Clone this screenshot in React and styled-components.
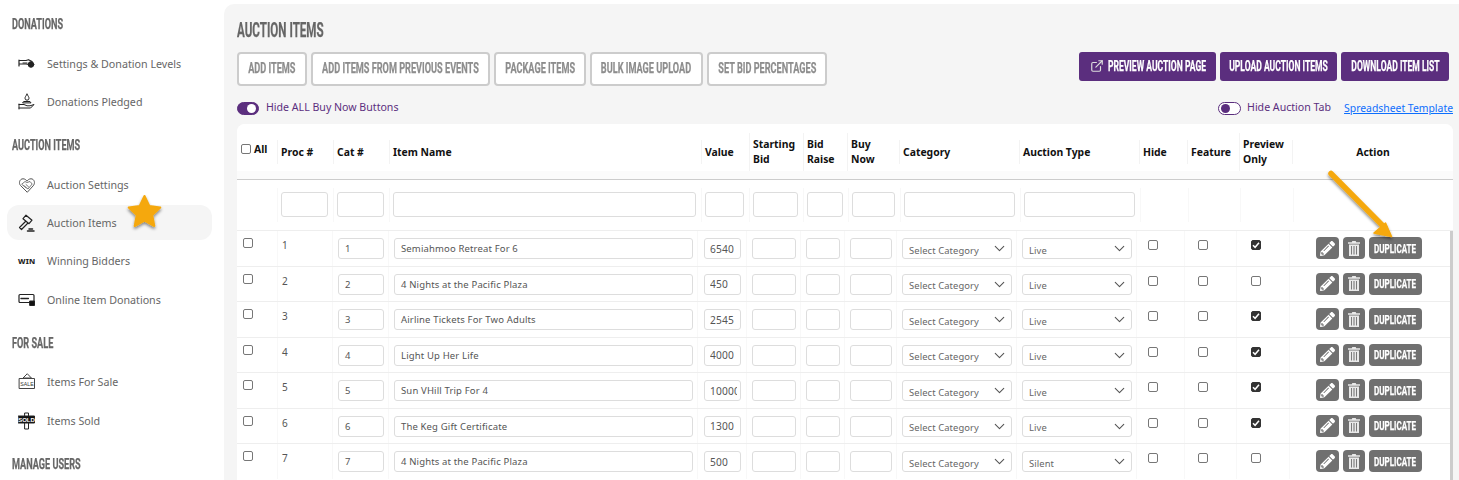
import React from "react";
import styled, { createGlobalStyle } from "styled-components";
import { ExternalLink, ChevronDown } from "lucide-react";
import { FaPencilAlt } from "react-icons/fa";

const Global = createGlobalStyle`
  html, body { margin: 0; padding: 0; height: 480px; overflow: hidden; background: #fff; }
  * { box-sizing: border-box; }
  body { font-family: "Noto Sans", "Open Sans", sans-serif; }
`;
const Display = `font-family: "Roboto", "Liberation Sans", sans-serif; font-weight: 700; text-transform: uppercase; -webkit-text-stroke: .25px currentColor;`;
const HEAD_COLS = "40px 56px 56px 312px 48px 54px 44px 52px 120px 120px 48px 52px 53px 161px";
const FILTER_COLS = "40px 56px 56px 312px 48px 54px 45px 52px 120px 120px 48px 52px 53px 160px";
const BODY_COLS = "40px 55px 56px 309px 49px 54px 44px 52px 120px 120px 48px 52px 53px 164px";

const Squeeze = styled.span`
  display: inline-block; flex: none; white-space: nowrap;
  transform: scaleX(${p => p.$s || 0.61}); transform-origin: ${p => p.$left ? "left" : "center"};
`;
const Page = styled.div`position: relative; display: flex; width: 1459px; height: 480px; overflow: hidden;`;
const Sidebar = styled.nav`width: 224px; flex: none; padding: 18px 12px 0 7px; display: flex; flex-direction: column;`;
const SideHeading = styled.h3`
  ${Display} margin: ${p => p.$top || 0}px 0 0 5px; height: 14px; line-height: 14px; font-size: 14.5px; color: #666; white-space: nowrap;
`;
const SideList = styled.div`display: flex; flex-direction: column; margin-top: ${p => p.$top || 14}px;`;
const SideItem = styled.div`
  display: flex; align-items: center; height: ${p => p.$h || 38}px; margin-top: ${p => p.$mt || 0}px; padding-left: 11px; border-radius: 12px;
  background: ${p => p.$active ? "#f5f5f5" : "transparent"};
  font-size: 10.7px; color: #666; white-space: nowrap;
`;
const SideIcon = styled.span`width: 29px; flex: none; display: flex; align-items: center; color: #111;`;
const WinMark = styled.span`font-size: 7.5px; font-weight: 800; color: #222; letter-spacing: .2px;`;

const Main = styled.main`flex: 1; margin: 4px 0 0 0; background: #f5f5f5; border-radius: 10px 0 0 0; padding: 0 6px 0 13px; position: relative;`;
const Title = styled.h1`${Display} margin: 16px 0 0; height: 20px; line-height: 20px; font-size: 20px; color: #666; white-space: nowrap;`;
const ActionsBar = styled.div`display: flex; justify-content: space-between; align-items: flex-start; margin-top: 12px; padding-right: 4px;`;
const BtnGroup = styled.div`display: flex; gap: 4px;`;
const OutlineBtn = styled.button`
  ${Display} display: flex; align-items: center; justify-content: center; width: ${p => p.$w}px; height: 34px; padding: 0 0 2px; background: #fff; border: 2px solid #ccc; border-radius: 4px; color: #8d8d8d; font-size: 15px;
`;
const PurpleBtn = styled.button`
  ${Display} position: relative; display: flex; align-items: center; justify-content: center; width: ${p => p.$w}px; height: 29px; padding: 0 0 2px ${p => p.$pl || 0}px; background: #5b2e7e; border: 0; border-radius: 3px; color: #fff; font-size: 15px;
`;
const BtnIcon = styled.span`position: absolute; left: 11px; top: 7px; display: flex; -webkit-text-stroke: 0;`;
const ToggleBar = styled.div`display: flex; justify-content: space-between; align-items: center; margin-top: 16px; height: 13px; font-size: 10.6px; color: #5b2e7e;`;
const ToggleSet = styled.div`display: flex; align-items: center; gap: ${p => p.$gap || 7}px;`;
const ToggleText = styled.span`margin-top: -3px;`;
const Toggle = styled.span`
  width: ${p => p.$on ? 22 : 23}px; height: 13px; border-radius: 7px; display: flex; align-items: center; padding: 0 2px;
  border: 1px solid #5b2e7e; background: ${p => p.$on ? "#5b2e7e" : "#fff"}; justify-content: ${p => p.$on ? "flex-end" : "flex-start"};
  &::after { content: ""; width: 9px; height: 9px; border-radius: 50%; background: ${p => p.$on ? "#fff" : "#5b2e7e"}; }
`;
const SheetLink = styled.a`color: #0d6efd; text-decoration: underline; margin: -1px 0 0 7px; font-size: 10.4px;`;

const Card = styled.section`margin-top: 9px; width: 1216px; height: 360px; background: #fff; border-radius: 8px 8px 0 0; position: relative; overflow: hidden;`;
const HeadRow = styled.div`
  display: grid; grid-template-columns: ${HEAD_COLS}; height: 56px; align-items: center; border-bottom: 1px solid #ccc;
  background: linear-gradient(#fff 47px, #fbfbfb 47px);
`;
const HeadCell = styled.div`
  display: flex; align-items: center; justify-content: ${p => p.$center ? "center" : "flex-start"}; height: ${p => p.$tall ? 38 : 24}px; padding: ${p => p.$tall ? 0 : 2}px 0 0 ${p => p.$center ? 0 : 3}px;
  border-left: ${p => p.$first ? 0 : 1}px solid #f3f3f3; font-size: 10.4px; line-height: 15px; font-weight: 700; color: #111; white-space: nowrap;
`;
const AllLabel = styled.label`display: flex; align-items: center; gap: 3px; margin: -7px 0 0 1px;`;
const SmallCheck = styled.span`width: 10px; height: 10px; border: 1px solid #767676; border-radius: 2px; background: #fff;`;
const FilterRow = styled.div`display: grid; grid-template-columns: ${FILTER_COLS}; height: 50px; align-items: center;`;
const FilterCell = styled.div`padding: 0 5px 0 3px; height: 34px; display: flex; align-items: center; border-left: ${p => p.$first ? 0 : 1}px solid #f8f8f8;`;
const FilterBox = styled.span`display: block; width: 100%; height: 25px; margin-top: -1px; border: 1px solid #ddd; border-radius: 3px; background: #fff;`;
const Row = styled.div`display: grid; grid-template-columns: ${BODY_COLS}; height: 35.5px; border-top: 1px solid #eee; align-items: stretch;`;
const Cell = styled.div`
  display: flex; align-items: ${p => p.$top ? "flex-start" : "center"}; padding: ${p => p.$top ? "7px 4px 0 4px" : "0 4px 0 5px"};
  border-left: ${p => p.$first ? 0 : 1}px solid #f8f8f8;
  font-size: 10px; color: #555; overflow: hidden;
`;
const ValueCell = styled(Cell)`padding: 0 5px 0 6px;`;
const CheckCell = styled(Cell)`padding: ${p => p.$pt || 9}px 0 0 ${p => p.$pl}px; align-items: flex-start;`;
const Box = styled.span`
  display: flex; width: 100%; height: 21px; margin-top: .5px; align-items: center; padding-left: 6px; border: 1px solid #ddd; border-radius: 3px; background: #fff; font-size: 9.5px; color: #555; white-space: nowrap; overflow: hidden; letter-spacing: .15px;
`;
const ValueBox = styled(Box)`
  padding: 0 3px 0 5px; font-size: 10.2px; letter-spacing: .2px;
  & > span { display: block; min-width: 0; overflow: hidden; }
`;
const SelectBox = styled(Box)`
  justify-content: space-between; padding: 0 3px 0 6px; font-size: 9.4px; color: #666; letter-spacing: .1px;
  & > span { height: 12px; line-height: 14px; margin-top: 2px; overflow: hidden; }
`;
const Check = styled.span`
  width: 10px; height: 10px; border: 1px solid ${p => p.$on ? "#333" : "#777"}; border-radius: 2px; background: ${p => p.$on ? "#333" : "#fff"};
  display: flex; align-items: center; justify-content: center;
  svg { display: block; }
`;
const ActionWrap = styled(Cell)`padding: 0 0 0 26px; gap: 4px;`;
const IconBtn = styled.button`
  width: ${p => p.$w}px; height: 22px; padding: 0; border: 0; border-radius: 4px; background: #707070; color: #fff;
  display: flex; align-items: center; justify-content: center;
`;
const DupBtn = styled(IconBtn)`${Display} font-size: 13px; color: #fff;`;
const ScrollThumb = styled.div`position: absolute; right: 0; top: 107px; width: 3px; height: 260px; background: #ccc;`;
const Overlay = styled.svg`position: absolute; left: 0; top: 0; pointer-events: none; overflow: visible;`;

const Ic = ({ children, w = 18, h = 18, vb = "0 0 18 18" }) => (
  <svg width={w} height={h} viewBox={vb} fill="none" stroke="#222" strokeWidth="1" strokeLinecap="round" strokeLinejoin="round">{children}</svg>
);

const HandCoin = () => <Ic><path d="M1 5v6M1 5.500h7l2.500-.8 3.500 1.800v1.600l-3 1.400-3-.5H1" strokeWidth="1.200" /><circle cx="13" cy="9.500" r="2.800" fill="#222" /><path d="M5 8h4" /></Ic>;
const HandDrop = () => <Ic><path d="M9 1.200c-1 1.700-2 2.800-2 4a2 2 0 0 0 4 0c0-1.200-1-2.300-2-4z" /><path d="M6 8.500h6l1 1.400H5z" /><path d="M1 11v5M1 11.500h5l3 1.300h3l4-1.300-3.400 3.500H1" /></Ic>;
const HeartHands = () => <Ic><path d="M9 16 2.600 9.600C.4 7.300 1.600 2.800 5 2.800c1.800 0 3 1 4 2.300 1-1.300 2.200-2.300 4-2.300 3.400 0 4.600 4.500 2.400 6.800z" stroke="#555" /><path d="M4 8l3-2.500 2 1 3-1 2.200 2.500-4.200 5-3.200-2.200zM6 9.500l2 2M8 8.500l2.600 2.400" stroke="#555" strokeWidth=".8" /></Ic>;
const Gavel = () => <Ic><path d="M8 1.200l6 5-3 3.500-6-5z" strokeWidth="1.200" /><path d="M7.500 7.500 1.500 13.500l2 2 6-6" strokeWidth="1.200" /><path d="M9.500 17h6.500M11 15h3.500" strokeWidth="1.500" /></Ic>;
const Screen = () => <Ic><rect x="1" y="3.500" width="15" height="8" rx="1" strokeWidth="1.200" /><path d="M3 7.500h8" strokeWidth="1.400" strokeDasharray="1 .6" /><rect x="12" y="10" width="4.500" height="4.500" fill="#111" /></Ic>;
const SaleSign = () => (
  <Ic><path d="M9 1 5 5h8zM1.500 5.500h15v10h-15z" stroke="#444" /><text x="9" y="13" textAnchor="middle" fontFamily="Liberation Sans" fontSize="5.200" fill="#333" stroke="none">SALE</text></Ic>
);
const SoldSign = () => (
  <Ic><rect x="7" y="1" width="3.500" height="16" fill="#fff" /><rect x="0.500" y="4" width="16" height="7" fill="#111" /><text x="8.500" y="10" textAnchor="middle" fontFamily="Liberation Sans" fontSize="6" fontWeight="700" fill="#fff" stroke="none">SOLD</text></Ic>
);
const Trash = () => (
  <svg width="12" height="15" viewBox="0 0 12 15" fill="#e9e9e9"><path d="M4.300 0h3.400l.5 1.200H12v1.500H0V1.200h3.800z" /><path fillRule="evenodd" d="M1 3.600h10V15H1zM3 5v8.600h.9V5zm2.500 0v8.600h1V5zm2.600 0v8.600H9V5z" /></svg>
);
const Tick = () => (
  <svg width="8" height="8" viewBox="0 0 8 8" fill="none" stroke="#fff" strokeWidth="1.500"><path d="M1 4.200 3.100 6.300 7 1.800" /></svg>
);

const rows = [
  ["1", "Semiahmoo Retreat For 6", "6540", true, "Live"],
  ["2", "4 Nights at the Pacific Plaza", "450", false, "Live"],
  ["3", "Airline Tickets For Two Adults", "2545", true, "Live"],
  ["4", "Light Up Her Life", "4000", true, "Live"],
  ["5", "Sun VHill Trip For 4", "10000", true, "Live"],
  ["6", "The Keg Gift Certificate", "1300", true, "Live"],
  ["7", "4 Nights at the Pacific Plaza", "500", false, "Silent"],
];
const heads = ["Proc #", "Cat #", "Item Name", "Value", ["Starting", "Bid"], ["Bid", "Raise"], ["Buy", "Now"], "Category", "Auction Type", "Hide", "Feature", ["Preview", "Only"]];

export default function App() {
  return (
    <Page>
      <Global />
      <Sidebar>
        <SideHeading><Squeeze $left $s={0.63}>Donations</Squeeze></SideHeading>
        <SideList $top={13}>
          <SideItem><SideIcon><HandCoin /></SideIcon>Settings &amp; Donation Levels</SideItem>
          <SideItem><SideIcon><HandDrop /></SideIcon>Donations Pledged</SideItem>
        </SideList>
        <SideHeading $top={18}><Squeeze $left $s={0.63}>Auction Items</Squeeze></SideHeading>
        <SideList $top={13}>
          <SideItem><SideIcon><HeartHands /></SideIcon>Auction Settings</SideItem>
          <SideItem $active $h={35} $mt={1}><SideIcon><Gavel /></SideIcon>Auction Items</SideItem>
          <SideItem $h={42}><SideIcon><WinMark>WIN</WinMark></SideIcon>Winning Bidders</SideItem>
          <SideItem $h={36}><SideIcon><Screen /></SideIcon>Online Item Donations</SideItem>
        </SideList>
        <SideHeading $top={19}><Squeeze $left $s={0.63}>For Sale</Squeeze></SideHeading>
        <SideList $top={12}>
          <SideItem><SideIcon><SaleSign /></SideIcon>Items For Sale</SideItem>
          <SideItem $h={39}><SideIcon><SoldSign /></SideIcon>Items Sold</SideItem>
        </SideList>
        <SideHeading $top={18}><Squeeze $left $s={0.63}>Manage Users</Squeeze></SideHeading>
      </Sidebar>
      <Main>
        <Title><Squeeze $left $s={0.58}>Auction Items</Squeeze></Title>
        <ActionsBar>
          <BtnGroup>
            <OutlineBtn $w={70}><Squeeze>Add Items</Squeeze></OutlineBtn>
            <OutlineBtn $w={179}><Squeeze>Add Items From Previous Events</Squeeze></OutlineBtn>
            <OutlineBtn $w={92}><Squeeze>Package Items</Squeeze></OutlineBtn>
            <OutlineBtn $w={113}><Squeeze>Bulk Image Upload</Squeeze></OutlineBtn>
            <OutlineBtn $w={120}><Squeeze>Set Bid Percentages</Squeeze></OutlineBtn>
          </BtnGroup>
          <BtnGroup>
            <PurpleBtn $w={137} $pl={20}><BtnIcon><ExternalLink size={14} strokeWidth={2} color="#ddd" /></BtnIcon><Squeeze $s={0.57}>Preview Auction Page</Squeeze></PurpleBtn>
            <PurpleBtn $w={117}><Squeeze $s={0.57}>Upload Auction Items</Squeeze></PurpleBtn>
            <PurpleBtn $w={108}><Squeeze $s={0.57}>Download Item List</Squeeze></PurpleBtn>
          </BtnGroup>
        </ActionsBar>
        <ToggleBar>
          <ToggleSet><Toggle $on /><ToggleText>Hide ALL Buy Now Buttons</ToggleText></ToggleSet>
          <ToggleSet $gap={6}><Toggle /><ToggleText>Hide Auction Tab</ToggleText><SheetLink href="#">Spreadsheet Template</SheetLink></ToggleSet>
        </ToggleBar>
        <Card>
          <HeadRow>
            <HeadCell $first><AllLabel><SmallCheck />All</AllLabel></HeadCell>
            {heads.map((h, i) => (
              <HeadCell key={i} $tall={Array.isArray(h)}>
                {Array.isArray(h) ? <span>{h[0]}<br />{h[1]}</span> : h}
              </HeadCell>
            ))}
            <HeadCell $center>Action</HeadCell>
          </HeadRow>
          <FilterRow>
            <FilterCell $first />
            {[0, 1, 2, 3, 4, 5, 6, 7, 8].map(i => <FilterCell key={i}><FilterBox /></FilterCell>)}
            <FilterCell /><FilterCell /><FilterCell /><FilterCell />
          </FilterRow>
          {rows.map(r => (
            <Row key={r[0]}>
              <CheckCell $first $pl={6} $pt={7}><Check /></CheckCell>
              <Cell $top>{r[0]}</Cell>
              <Cell><Box>{r[0]}</Box></Cell>
              <Cell><Box>{r[1]}</Box></Cell>
              <ValueCell><ValueBox><span>{r[2]}</span></ValueBox></ValueCell>
              <Cell><Box /></Cell>
              <Cell><Box /></Cell>
              <Cell><Box /></Cell>
              <Cell><SelectBox><span>Select Category</span><ChevronDown size={17} strokeWidth={1.5} color="#555" /></SelectBox></Cell>
              <Cell><SelectBox><span>{r[4]}</span><ChevronDown size={17} strokeWidth={1.5} color="#555" /></SelectBox></Cell>
              <CheckCell $pl={11}><Check /></CheckCell>
              <CheckCell $pl={13}><Check /></CheckCell>
              <CheckCell $pl={14}><Check $on={r[3]}>{r[3] && <Tick />}</Check></CheckCell>
              <ActionWrap>
                <IconBtn $w={23}><FaPencilAlt size={15} color="#fff" /></IconBtn>
                <IconBtn $w={22}><Trash /></IconBtn>
                <DupBtn $w={53}><Squeeze $s={0.62}>Duplicate</Squeeze></DupBtn>
              </ActionWrap>
            </Row>
          ))}
          <ScrollThumb />
        </Card>
      </Main>
      <Overlay width="1459" height="480" viewBox="0 0 1459 480">
        <defs>
          <filter id="sh" x="-30%" y="-30%" width="160%" height="160%">
            <feDropShadow dx="0" dy="2" stdDeviation="1.600" floodColor="#000" floodOpacity=".45" />
          </filter>
        </defs>
        <path d="M144.500 196l4.800 10 11 1.500-8 7.600 2 10.900-9.800-5.300-9.800 5.300 2-10.900-8-7.600 11-1.500z" fill="#f5a80d" stroke="#f5a80d" strokeWidth="2" strokeLinejoin="round" filter="url(#sh)" />
        <g filter="url(#sh)">
          <path d="M1331 173.500 1385 228" stroke="#f5a80d" strokeWidth="5.500" strokeLinecap="round" />
          <path d="M1374 233 1391.500 236.500 1385.500 223z" fill="#f5a80d" stroke="#f5a80d" strokeWidth="1.500" strokeLinejoin="round" />
        </g>
      </Overlay>
    </Page>
  );
}
